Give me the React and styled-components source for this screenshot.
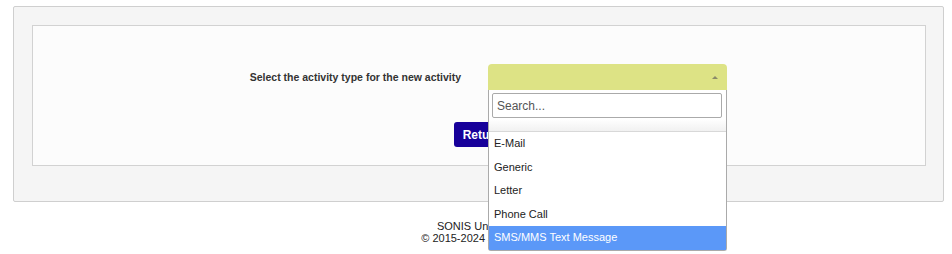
import React from "react";
import styled, { createGlobalStyle } from "styled-components";

const GlobalStyle = createGlobalStyle`
  html, body {
    margin: 0;
    padding: 0;
    background: #ffffff;
    font-family: "Liberation Sans", Arial, sans-serif;
  }
`;

const activityTypes = ["E-Mail", "Generic", "Letter", "Phone Call", "SMS/MMS Text Message"];

const App = () => {
  return (
    <Page>
      <GlobalStyle />
      <OuterPanel>
        <InnerPanel>
          <FieldRow>
            <Label>Select the activity type for the new activity</Label>
            <SelectWrap>
              <SelectBox>
                <Arrow />
              </SelectBox>
              <Dropdown>
                <SearchWrap>
                  <SearchInput placeholder="Search..." />
                </SearchWrap>
                <Strip />
                <Results>
                  {activityTypes.map((type, i) => (
                    <Option key={type} $active={i === activityTypes.length - 1}>
                      {type}
                    </Option>
                  ))}
                </Results>
              </Dropdown>
            </SelectWrap>
          </FieldRow>
          <ButtonRow>
            <ReturnButton>Return</ReturnButton>
          </ButtonRow>
        </InnerPanel>
      </OuterPanel>
      <Footer>
        <div>SONIS Universal</div>
        <div>© 2015-2024 Jenzabar,</div>
      </Footer>
    </Page>
  );
};

const Page = styled.div`
  min-height: 254px;
  box-sizing: border-box;
  padding: 6px 8px 0 13px;
`;

const OuterPanel = styled.section`
  background: #f5f5f5;
  border: 1px solid #cfcfcf;
  border-radius: 2px;
  padding: 18px 17px 35px 18px;
`;

const InnerPanel = styled.div`
  background: #fcfcfc;
  border: 1px solid #d2d2d2;
  padding: 38px 0 18px;
`;

const FieldRow = styled.div`
  display: grid;
  grid-template-columns: 428px 239px;
  column-gap: 27px;
  align-items: center;
`;

const Label = styled.label`
  text-align: right;
  font-size: 10.5px;
  font-weight: bold;
  color: #333;
`;

const SelectWrap = styled.div`
  position: relative;
`;

const SelectBox = styled.div`
  height: 26px;
  background: #dde385;
  border-radius: 4px 4px 0 0;
  position: relative;
`;

const Arrow = styled.span`
  position: absolute;
  right: 9px;
  top: 12px;
  width: 0;
  height: 0;
  border-left: 3px solid transparent;
  border-right: 3px solid transparent;
  border-bottom: 3px solid #8a8a6a;
`;

const Dropdown = styled.div`
  position: absolute;
  top: 26px;
  left: 0;
  width: 239px;
  box-sizing: border-box;
  background: #ffffff;
  border: 1px solid #aaa;
  border-top: none;
  border-radius: 0 0 3px 3px;
  z-index: 10;
`;

const SearchWrap = styled.div`
  padding: 3px 4px 0 3px;
`;

const SearchInput = styled.input`
  width: 100%;
  box-sizing: border-box;
  height: 25px;
  border: 1px solid #aaa;
  border-radius: 2px;
  padding: 0 4px;
  font-family: "Liberation Sans", Arial, sans-serif;
  font-size: 12px;
  color: #333;
  outline: none;
  &::placeholder {
    color: #555;
  }
`;

const Strip = styled.div`
  height: 12px;
  margin-top: 1px;
  background: linear-gradient(#ffffff, #f1f1f1);
  border-bottom: 1px solid #d8d8d8;
`;

const Results = styled.ul`
  list-style: none;
  margin: 0;
  padding: 0;
`;

const Option = styled.li`
  padding: 5px 5px;
  line-height: 13.6px;
  font-size: 11px;
  color: ${(p) => (p.$active ? "#ffffff" : "#222")};
  background: ${(p) => (p.$active ? "#5b98f8" : "transparent")};
`;

const ButtonRow = styled.div`
  display: flex;
  justify-content: center;
  margin-top: 32px;
  padding-left: 6px;
`;

const ReturnButton = styled.button`
  height: 25px;
  padding: 0 9px;
  background: #17009a;
  color: #ffffff;
  border: none;
  border-radius: 3px;
  font-family: "Liberation Sans", Arial, sans-serif;
  font-size: 12px;
  font-weight: bold;
`;

const Footer = styled.footer`
  margin-top: 18px;
  text-align: center;
  font-size: 11px;
  line-height: 12px;
  color: #222;
`;

export default App;
